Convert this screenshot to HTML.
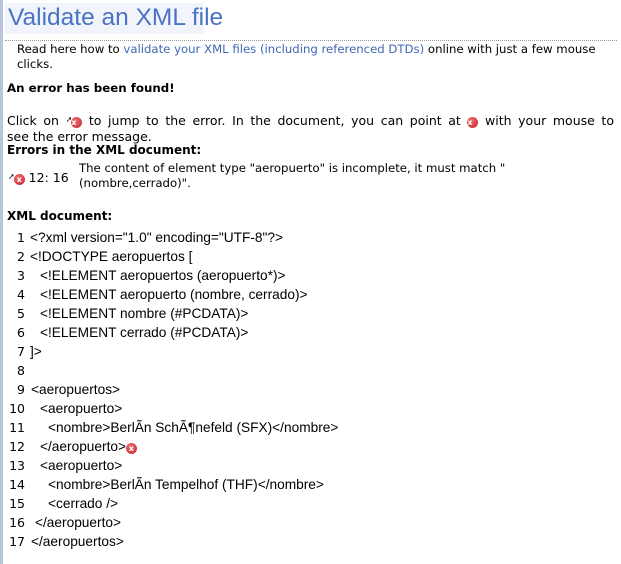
<!DOCTYPE html>
<html><head><meta charset="utf-8"><style>
body{margin:0;width:621px;height:564px;background:#fff;position:relative;overflow:hidden;font-family:"DejaVu Sans",Verdana,sans-serif;font-size:13px;color:#000}
.lb{position:absolute;left:0;top:0;width:3px;height:564px;background:#b9c5da}
.t{position:absolute;left:5px;top:3px;width:198px;height:31px;background:#f1f4fa}
.t span{position:absolute;left:3px;top:1px;font-family:"Liberation Sans",Arial,sans-serif;font-size:24.5px;color:#4a73c2;white-space:nowrap}
.dot{position:absolute;left:5px;top:40px;width:612px;border-top:1px dotted #999}
.a{position:absolute;white-space:nowrap}
a{color:#3f68b3;text-decoration:none}
.x{display:inline-block;width:11px;height:11px;border-radius:50%;background:radial-gradient(circle at 40% 35%,#f07070,#c0202a);color:#fff;font-size:8px;line-height:11px;text-align:center;font-weight:bold;vertical-align:0px;font-family:"DejaVu Sans",sans-serif}
.ar{font-size:8px;vertical-align:3px;margin-right:-1px}
.n{position:absolute;width:25px;text-align:right;font-size:12.5px}
.c{position:absolute;font-family:"Liberation Sans",Arial,sans-serif;font-size:13.7px;white-space:nowrap}
</style></head><body>
<div class="lb"></div>
<div class="t"><span>Validate an XML file</span></div>
<div class="dot"></div>
<div class="a" style="left:17px;top:42px;font-size:11.7px;line-height:15px;white-space:normal;width:600px">Read here how to <a>validate your XML files (including referenced DTDs)</a> online with just a few mouse clicks.</div>
<div class="a" style="left:7px;top:81px;font-weight:bold;font-size:11.8px">An error has been found!</div>
<div class="a" style="left:7px;top:112px;font-size:12.5px;line-height:16px;width:607px"><div style="text-align:justify;text-align-last:justify">Click on <span class="ar">&#10138;</span><span class="x">x</span> to jump to the error. In the document, you can point at <span class="x">x</span> with your mouse to</div><div>see the error message.</div></div>
<div class="a" style="left:7px;top:143px;font-weight:bold;font-size:12px">Errors in the XML document:</div>
<div class="a" style="left:8px;top:170px;font-size:12.5px"><span class="ar">&#10138;</span><span class="x">x</span> 12: 16</div>
<div class="a" style="left:79px;top:161px;font-size:11.7px;line-height:15px">The content of element type "aeropuerto" is incomplete, it must match "<br>(nombre,cerrado)".</div>
<div class="a" style="left:7px;top:209px;font-weight:bold;font-size:12px">XML document:</div>

<div class="n" style="left:0;top:230px">1</div><div class="c" style="left:30px;top:230px">&lt;?xml version="1.0" encoding="UTF-8"?&gt;</div>
<div class="n" style="left:0;top:249px">2</div><div class="c" style="left:30px;top:249px">&lt;!DOCTYPE aeropuertos [</div>
<div class="n" style="left:0;top:268px">3</div><div class="c" style="left:40px;top:268px">&lt;!ELEMENT aeropuertos (aeropuerto*)&gt;</div>
<div class="n" style="left:0;top:287px">4</div><div class="c" style="left:40px;top:287px">&lt;!ELEMENT aeropuerto (nombre, cerrado)&gt;</div>
<div class="n" style="left:0;top:306px">5</div><div class="c" style="left:40px;top:306px">&lt;!ELEMENT nombre (#PCDATA)&gt;</div>
<div class="n" style="left:0;top:325px">6</div><div class="c" style="left:40px;top:325px">&lt;!ELEMENT cerrado (#PCDATA)&gt;</div>
<div class="n" style="left:0;top:344px">7</div><div class="c" style="left:30px;top:344px">]&gt;</div>
<div class="n" style="left:0;top:363px">8</div>
<div class="n" style="left:0;top:382px">9</div><div class="c" style="left:31px;top:382px">&lt;aeropuertos&gt;</div>
<div class="n" style="left:0;top:401px">10</div><div class="c" style="left:40px;top:401px">&lt;aeropuerto&gt;</div>
<div class="n" style="left:0;top:420px">11</div><div class="c" style="left:48px;top:420px">&lt;nombre&gt;BerlÃn SchÃ¶nefeld (SFX)&lt;/nombre&gt;</div>
<div class="n" style="left:0;top:439px">12</div><div class="c" style="left:40px;top:439px">&lt;/aeropuerto&gt;<span class="x">x</span></div>
<div class="n" style="left:0;top:458px">13</div><div class="c" style="left:40px;top:458px">&lt;aeropuerto&gt;</div>
<div class="n" style="left:0;top:477px">14</div><div class="c" style="left:48px;top:477px">&lt;nombre&gt;BerlÃn Tempelhof (THF)&lt;/nombre&gt;</div>
<div class="n" style="left:0;top:496px">15</div><div class="c" style="left:48px;top:496px">&lt;cerrado /&gt;</div>
<div class="n" style="left:0;top:515px">16</div><div class="c" style="left:35px;top:515px">&lt;/aeropuerto&gt;</div>
<div class="n" style="left:0;top:534px">17</div><div class="c" style="left:31px;top:534px">&lt;/aeropuertos&gt;</div>
</body></html>
